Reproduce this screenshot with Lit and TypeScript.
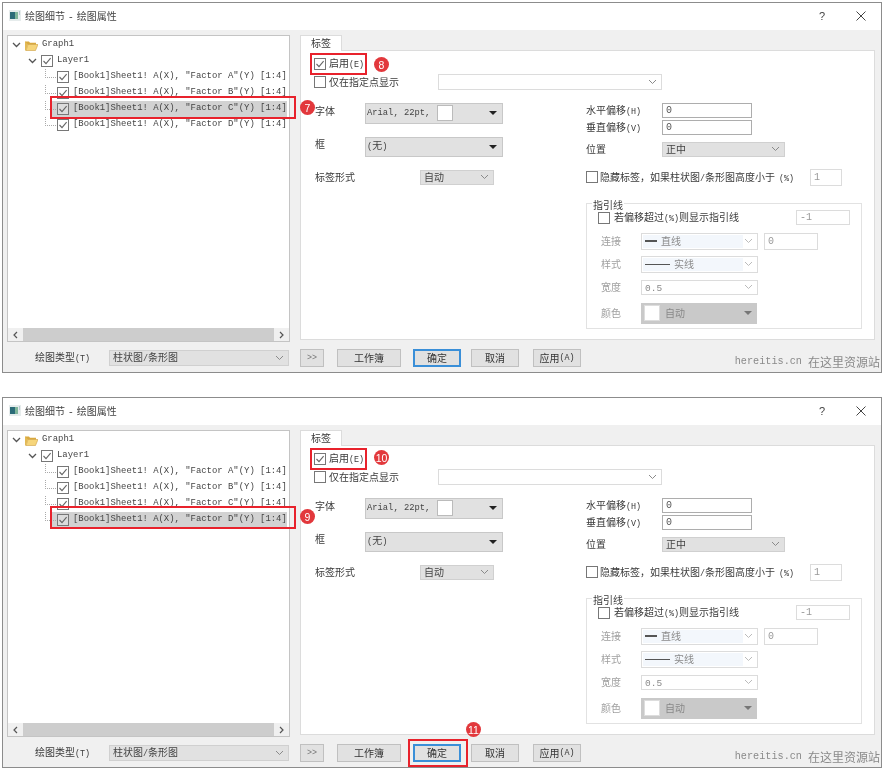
import { LitElement, html, css, svg, nothing } from "lit";
import { customElement, property } from "lit/decorators.js";

// CJK system UI text pairs wide glyphs with half-width Latin: wrap the Latin runs.
const t = (s: string) =>
  s.split(/([\x21-\x7e](?:[\x20-\x7e]*[\x21-\x7e])?)/).map((p, i) => (i % 2 ? html`<span class="lat">${p}</span>` : p));

const chevron = () => html`<svg class="chev" width="9" height="6" viewBox="0 0 9 6"><path d="M1 1l3.5 3.5L8 1" fill="none" stroke="#8a8a8a" stroke-width="1"/></svg>`;
const tri = (c = "#222") => html`<svg class="tri" width="8" height="4" viewBox="0 0 8 4"><path d="M0 0h8L4 4z" fill="${c}"/></svg>`;
const check = (on: boolean) => html`<svg class="cb" width="12" height="12" viewBox="0 0 12 12"><rect class="cbf" x=".5" y=".5" width="11" height="11" fill="#fff" stroke="#777"/>${on ? svg`<path d="M2.5 6l2.5 2.6L9.6 3.2" fill="none" stroke="#666" stroke-width="1.1"/>` : nothing}</svg>`;

@customElement("plot-dialog")
class PlotDialog extends LitElement {
  @property({ type: Number }) selected = 2;
  @property({ type: Boolean }) second = false;

  static styles = css`
    :host { display: block; }
    .dlg { position: relative; height: 371px; box-sizing: border-box; border: 1px solid #8c8c8c; background: #f0f0f0; display: flex; flex-direction: column; color: #3a3a3a; font: 10px/1.2 "Noto Sans CJK SC", sans-serif; overflow: hidden; }
    .lat { font-family: "Liberation Mono", monospace; font-size: 8.4px; white-space: pre; }
    .title { height: 25px; flex: none; background: #fff; display: flex; align-items: center; padding: 0 0 2px 6px; font-size: 10px; color: #444; }
    .title .ticon { margin-right: 4px; }
    .title .dash { font: 11px "Liberation Sans", sans-serif; padding: 0 4px; }
    .title .txt { flex: 1; }
    .q { width: 10px; text-align: center; margin-right: 29px; font: 11px "Liberation Sans", sans-serif; color: #444; }
    .x { margin-right: 15px; display: block; }
    .body { flex: 1; display: flex; gap: 10px; padding: 5px 6px 0 4px; min-height: 0; }
    .tree { position: relative; width: 283px; height: 307px; box-sizing: border-box; border: 1px solid #c4c4c4; background: #fff; display: flex; flex-direction: column; padding-top: 1px; }
    .rows { flex: 1; font: 8.92px/16px "Liberation Mono", monospace; color: #444; }
    .r { height: 16px; display: flex; align-items: center; white-space: pre; }
    .r svg { flex: none; }
    .r > span:last-child { margin-bottom: 2px; }
    .r0 { padding-left: 4px; }
    .r0 .ex { margin-right: 4px; }
    .r0 .f { margin-right: 4px; }
    .r1 { padding-left: 20px; }
    .r1 .ex { margin-right: 4px; }
    .r1 .cb { margin-right: 4px; }
    .r2 { position: relative; padding-left: 49px; margin-right: 2px; }
    .r2 .cb { margin-right: 4px; }
    .r2 .tick { position: absolute; left: 37px; top: 0; width: 10px; height: 8px; border-left: 1px dotted #aaa; border-bottom: 1px dotted #aaa; }
    .r2.picked .bg { position: absolute; left: 44px; right: 0; top: 0; bottom: 0; background: #d2d2d2; }
    .r2.picked .cbf { fill: #dcdcdc; }
    .r2 > .cb, .r2 > .lab { position: relative; }
    .hbar { height: 13px; display: flex; background: #f0f0f0; align-items: center; }
    .hbar .ar { width: 15px; display: flex; justify-content: center; }
    .hbar .thumb { flex: 1; height: 100%; background: #cdcdcd; }
    .right { width: 575px; display: flex; flex-direction: column; }
    .tabs { height: 15px; display: flex; }
    .tab { width: 42px; box-sizing: border-box; border: 1px solid #dcdcdc; border-bottom: 0; background: #fff; text-align: center; line-height: 14px; margin-bottom: -1px; position: relative; z-index: 1; }
    .panel { height: 292px; box-sizing: border-box; border: 1px solid #dcdcdc; background: #fff; padding-left: 13px; position: relative; }
    .rowc { display: flex; align-items: center; gap: 3px; }
    .en { height: 12px; margin-top: 7px; }
    .only { height: 16px; margin-top: 4px; }
    .only .dd { margin-left: 36px; width: 224px; height: 16px; }
    .columns { display: flex; margin-top: 13px; }
    .colL { width: 272px; display: flex; flex-direction: column; gap: 13px; padding-left: 1px; box-sizing: border-box; }
    .fr { display: flex; align-items: center; }
    .fr .l { width: 50px; }
    .fr .l.up { margin-bottom: 5px; }
    .ctl { width: 138px; box-sizing: border-box; background: #e1e1e1; border: 1px solid #c8c8c8; display: flex; align-items: center; padding: 0 5px 0 1px; color: #444; }
    .ctl .lat { font-size: 8.8px; }
    .ctl .cap { margin-bottom: 3px; }
    .ctl .grow { flex: 1; }
    .swatch { width: 16px; height: 16px; box-sizing: border-box; background: #fff; border: 1px solid #bbb; margin-left: 7px; }
    .tall { height: 21px; }
    .mid { height: 20px; }
    .sel { box-sizing: border-box; background: #e1e1e1; border: 1px solid #d0d0d0; display: flex; align-items: center; justify-content: space-between; padding: 0 4px 0 3px; height: 15px; color: #444; }
    .dd { box-sizing: border-box; background: #fff; border: 1px solid #dcdcdc; display: flex; align-items: center; justify-content: flex-end; padding-right: 4px; }
    .colR { flex: 1; display: flex; flex-direction: column; }
    .rr { display: flex; align-items: center; height: 15px; }
    .rr .l { width: 76px; }
    .inp { box-sizing: border-box; background: #fff; border: 1px solid #adadad; height: 15px; display: flex; align-items: center; padding-left: 3px; color: #555; font: 10px "Liberation Mono", monospace; }
    .inp.dis { border-color: #dcdcdc; color: #999; }
    .pct { margin-left: 4px; }
    .group { position: relative; box-sizing: border-box; width: 276px; height: 126px; margin-top: 17px; border: 1px solid #e2e2e2; padding: 6px 0 0 11px; }
    .legend { position: absolute; left: 5px; top: -5px; background: #fff; padding: 0 1px; }
    .lrow { display: flex; align-items: center; }
    .gr { display: flex; align-items: center; color: #a0a0a0; }
    .gr .l { width: 43px; padding-left: 3px; box-sizing: border-box; }
    .dsel { width: 117px; height: 17px; box-sizing: border-box; background: #fff; border: 1px solid #dcdcdc; display: flex; align-items: center; justify-content: space-between; padding: 1px 4px 1px 1px; color: #8a8a8a; }
    .dsel .chev path { stroke: #bbb; }
    .dsel .lat { font-size: 9.5px; }
    .fill { background: #f3f7fc; height: 100%; width: 100px; display: flex; align-items: center; gap: 4px; padding-left: 2px; box-sizing: border-box; }
    .ln { height: 2px; background: #555; width: 12px; }
    .ln.thin { height: 1px; width: 25px; }
    .gctl { width: 116px; height: 21px; box-sizing: border-box; background: #c9c9c9; display: flex; align-items: center; justify-content: space-between; padding: 0 5px 0 3px; color: #888; }
    .gctl .in { display: flex; align-items: center; gap: 5px; }
    .gctl .swatch { margin: 0; border-color: #ddd; }
    .foot { height: 32px; flex: none; display: flex; align-items: center; padding: 4px 0 0 0; box-sizing: border-box; position: relative; }
    .foot .fl { margin-left: 32px; width: 74px; }
    .foot .sel { width: 180px; height: 16px; }
    .btn { height: 18px; box-sizing: border-box; background: #e1e1e1; border: 1px solid #c0c0c0; display: flex; align-items: center; justify-content: center; color: #333; }
    .btn.def { border: 2px solid #3a8fd8; }
    .wm { margin-left: auto; margin-right: 1px; color: #8a8a8a; white-space: nowrap; font-size: 12px; margin-top: 8px; display: flex; align-items: center; gap: 6px; }
    .wm .lat { font-size: 10.2px; }
    .box { position: absolute; box-sizing: border-box; border: 2px solid #e8222c; pointer-events: none; z-index: 3; }
    .badge { position: absolute; width: 15px; height: 15px; border-radius: 50%; background: #e2383c; color: #fff; display: flex; align-items: center; justify-content: center; font: 10.5px "Liberation Sans", sans-serif; z-index: 4; }
  `;

  render() {
    const names = ["A", "B", "C", "D"];
    return html`<div class="dlg">
      <div class="title">
        <svg class="ticon" width="12" height="11" viewBox="0 0 12 11"><rect width="12" height="11" fill="#e6ecec"/><rect x="1" y="2" width="5" height="7" fill="#2c6b78"/><rect x="6" y="2" width="3" height="7" fill="#7fb59a"/><rect x="10" y="1" width="1" height="4" fill="#b8c8d0"/></svg>
        <span class="txt">绘图细节<span class="dash">-</span>绘图属性</span>
        <span class="q">?</span>
        <svg class="x" width="10" height="10" viewBox="0 0 10 10"><path d="M.5.5l9 9M9.5.5l-9 9" stroke="#444" fill="none"/></svg>
      </div>
      <div class="body">
        <div class="tree">
          <div class="rows">
            <div class="r r0">
              <svg class="ex" width="9" height="6" viewBox="0 0 9 6"><path d="M1 1l3.5 3.5L8 1" fill="none" stroke="#555" stroke-width="1.3"/></svg>
              <svg class="f" width="13" height="11" viewBox="0 0 13 11"><path d="M0 1.5h4l1 1.2h6v2H0z" fill="#d9a93f"/><path d="M1 10.5h9.5L13 4.5H3z" fill="#f6d57a" stroke="#cfa044" stroke-width=".6"/><path d="M0 1.5v9h1l2-6" fill="#e2b955"/></svg>
              <span>Graph1</span>
            </div>
            <div class="r r1">
              <svg class="ex" width="9" height="6" viewBox="0 0 9 6"><path d="M1 1l3.5 3.5L8 1" fill="none" stroke="#555" stroke-width="1.3"/></svg>
              ${check(true)}<span>Layer1</span>
            </div>
            ${names.map((n, i) => html`<div class="r r2 ${i === this.selected ? "picked" : ""}">
              ${i === this.selected ? html`<span class="bg"></span>` : nothing}
              <span class="tick"></span>${check(true)}<span class="lab">[Book1]Sheet1! A(X), "Factor ${n}"(Y) [1:4]</span>
            </div>`)}
          </div>
          <div class="hbar">
            <span class="ar"><svg width="5" height="8" viewBox="0 0 5 8"><path d="M4 1L1 4l3 3" fill="none" stroke="#555" stroke-width="1.2"/></svg></span>
            <span class="thumb"></span>
            <span class="ar"><svg width="5" height="8" viewBox="0 0 5 8"><path d="M1 1l3 3-3 3" fill="none" stroke="#555" stroke-width="1.2"/></svg></span>
          </div>
        </div>
        <div class="right">
          <div class="tabs"><div class="tab">标签</div></div>
          <div class="panel">
            <div class="rowc en">${check(true)}<span>${t("启用(E)")}</span></div>
            <div class="rowc only">${check(false)}<span>仅在指定点显示</span><div class="dd">${chevron()}</div></div>
            <div class="columns">
              <div class="colL">
                <div class="fr"><span class="l up">字体</span><div class="ctl tall"><span class="cap">${t("Arial, 22pt,")}</span><span class="swatch"></span><span class="grow"></span>${tri()}</div></div>
                <div class="fr"><span class="l up">框</span><div class="ctl mid"><span class="cap">${t("(无)")}</span><span class="grow"></span>${tri()}</div></div>
                <div class="fr"><span class="l" style="width:105px">标签形式</span><div class="sel" style="width:74px"><span>自动</span>${chevron()}</div></div>
              </div>
              <div class="colR">
                <div class="rr"><span class="l">${t("水平偏移(H)")}</span><div class="inp" style="width:90px">0</div></div>
                <div class="rr" style="margin-top:2px"><span class="l">${t("垂直偏移(V)")}</span><div class="inp" style="width:90px">0</div></div>
                <div class="rr" style="margin-top:7px"><span class="l">位置</span><div class="sel" style="width:123px"><span>正中</span>${chevron()}</div></div>
                <div class="rr" style="margin-top:12px;height:17px">${check(false)}<span style="width:212px;padding-left:2px;box-sizing:border-box">隐藏标签，如果柱状图${t("/")}条形图高度小于<span class="pct">${t("(%)")}</span></span><div class="inp dis" style="width:32px;height:17px">1</div></div>
                <div class="group">
                  <span class="legend">指引线</span>
                  <div class="lrow" style="height:16px">${check(false)}<span style="width:186px;padding-left:4px;box-sizing:border-box">若偏移超过${t("(%)")}则显示指引线</span><div class="inp dis" style="width:54px">-1</div></div>
                  <div class="gr" style="margin-top:7px"><span class="l">连接</span><div class="dsel"><span class="fill"><span class="ln"></span>直线</span>${chevron()}</div><div class="inp dis" style="width:54px;margin-left:6px;height:17px">0</div></div>
                  <div class="gr" style="margin-top:6px"><span class="l">样式</span><div class="dsel"><span class="fill"><span class="ln thin"></span>实线</span>${chevron()}</div></div>
                  <div class="gr" style="margin-top:7px"><span class="l">宽度</span><div class="dsel" style="height:15px;padding-left:3px"><span>${t("0.5")}</span>${chevron()}</div></div>
                  <div class="gr" style="margin-top:8px"><span class="l">颜色</span><div class="gctl"><span class="in"><span class="swatch"></span>自动</span>${tri("#777")}</div></div>
                </div>
              </div>
            </div>
          </div>
        </div>
      </div>
      <div class="foot">
        <span class="fl">${t("绘图类型(T)")}</span>
        <div class="sel"><span>柱状图${t("/")}条形图</span>${chevron()}</div>
        <div class="btn" style="width:24px;margin-left:11px;color:#777"><span class="lat">&gt;&gt;</span></div>
        <div class="btn" style="width:64px;margin-left:13px">工作簿</div>
        <div class="btn def" style="width:48px;margin-left:12px">确定</div>
        <div class="btn" style="width:48px;margin-left:10px">取消</div>
        <div class="btn" style="width:48px;margin-left:14px">${t("应用(A)")}</div>
        <div class="wm"><span class="lat">hereitis.cn</span><span>在这里资源站</span></div>
      </div>
      ${this.second
        ? html`
            <div class="box" style="left:47px;top:108px;width:246px;height:23px"></div>
            <div class="badge" style="left:297px;top:111px">9</div>
            <div class="box" style="left:307px;top:50px;width:57px;height:22px"></div>
            <div class="badge" style="left:371px;top:52px">10</div>
            <div class="box" style="left:405px;top:341px;width:60px;height:28px"></div>
            <div class="badge" style="left:463px;top:324px">11</div>`
        : html`
            <div class="box" style="left:47px;top:93px;width:246px;height:23px"></div>
            <div class="badge" style="left:297px;top:97px">7</div>
            <div class="box" style="left:307px;top:50px;width:57px;height:22px"></div>
            <div class="badge" style="left:371px;top:54px">8</div>`}
    </div>`;
  }
}

@customElement("app-root")
class AppRoot extends LitElement {
  static styles = css`
    :host { display: block; background: #fff; }
    .page { width: 884px; height: 773px; box-sizing: border-box; padding: 2px 2px 0 2px; display: flex; flex-direction: column; gap: 24px; filter: blur(0.5px); background: #fff; }
  `;
  render() {
    return html`<div class="page">
      <plot-dialog .selected=${2}></plot-dialog>
      <plot-dialog .selected=${3} .second=${true}></plot-dialog>
    </div>`;
  }
}
